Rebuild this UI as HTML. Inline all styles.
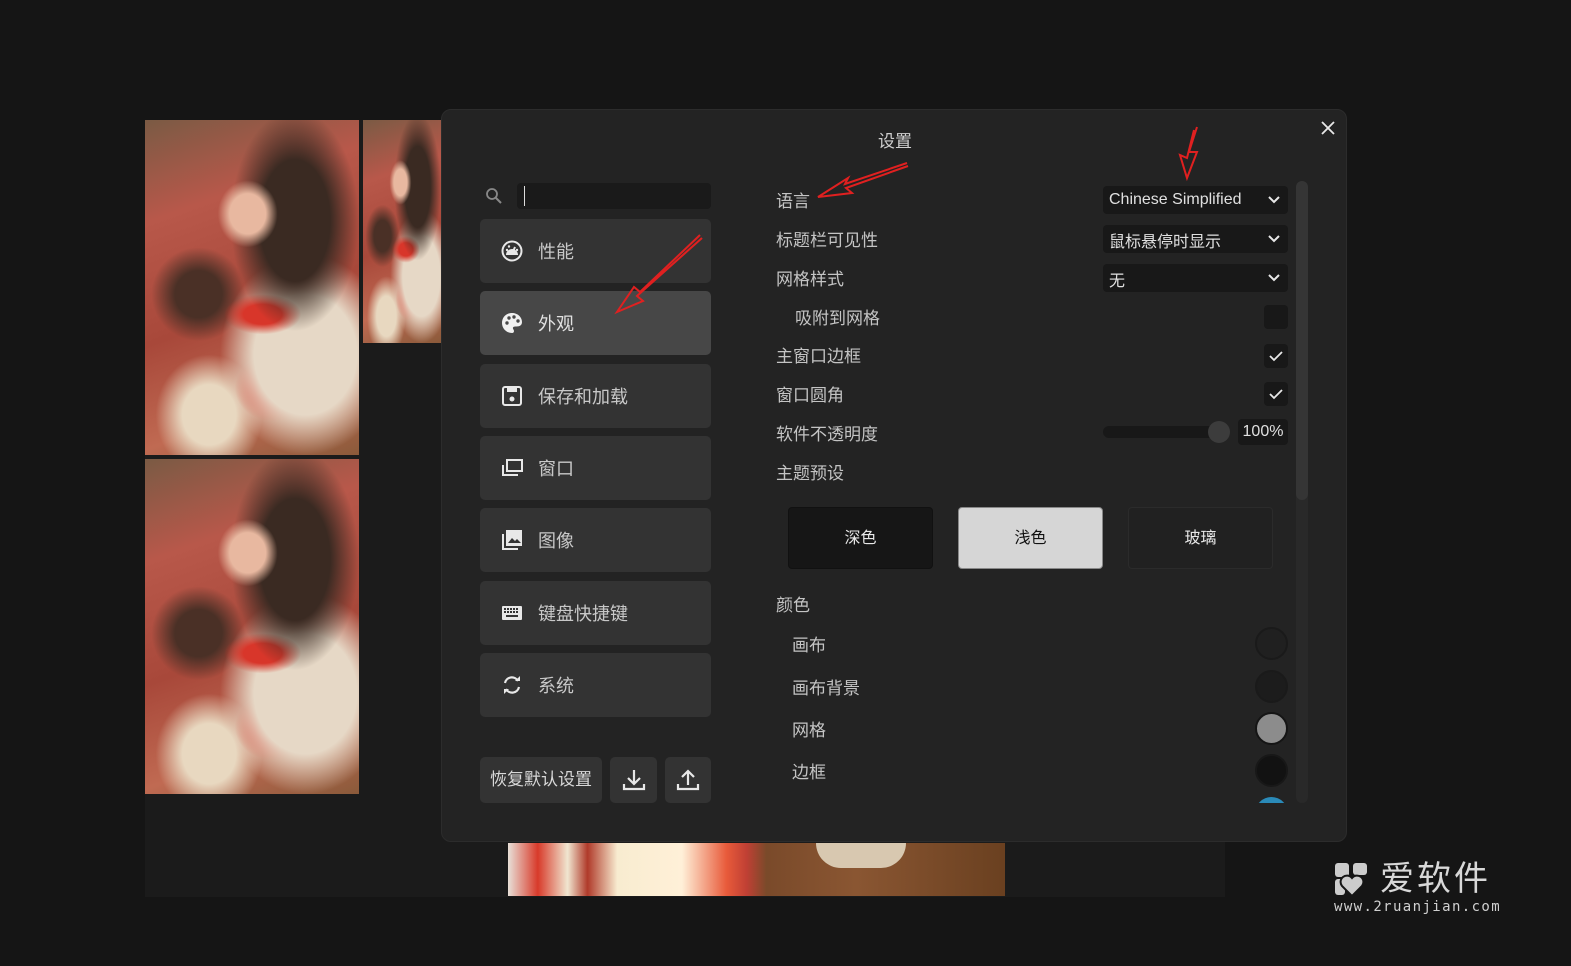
<!DOCTYPE html>
<html><head><meta charset="utf-8">
<style>
*{margin:0;padding:0;box-sizing:border-box}
body{width:1571px;height:966px;background:#151515;position:relative;overflow:hidden;font-family:"Liberation Sans","Noto Sans CJK SC",sans-serif;color:#d0d0d0}
.abs{position:absolute}
.photo{position:absolute;overflow:hidden;
background:
radial-gradient(ellipse 14% 10% at 48% 28%, #e8b8a0 0 60%, transparent 100%),
radial-gradient(ellipse 30% 33% at 70% 30%, #3a2a22 0 55%, transparent 100%),
radial-gradient(ellipse 18% 6% at 55% 58%, #d8362a 0 50%, transparent 100%),
radial-gradient(ellipse 40% 30% at 75% 70%, #e6d8c6 0 60%, transparent 100%),
radial-gradient(ellipse 18% 10% at 60% 80%, #d03a2a 0 50%, transparent 100%),
radial-gradient(ellipse 22% 14% at 25% 52%, #4a3026 0 50%, transparent 100%),
radial-gradient(ellipse 25% 18% at 30% 88%, #e8d8c0 0 50%, transparent 100%),
linear-gradient(160deg,#7a5a44 0%,#b8584a 25%,#a8483a 55%,#c06a52 80%,#8a5a3a 100%)}
.dlg{left:441px;top:109px;width:906px;height:733px;background:#232323;border-radius:10px;border:1px solid #2c2c2c}
.nav{position:absolute;left:480px;width:231px;height:64px;background:#333;border-radius:5px;font-size:18px;color:#c8c8c8}
.nav .t{position:absolute;left:58px;top:19px}
.nav svg{position:absolute;left:21px;top:21px}
.lbl{position:absolute;font-size:17px;color:#c4c4c4;left:776px}
.dd{position:absolute;left:1103px;width:185px;height:28px;background:#181818;border-radius:4px;font-size:16px;color:#e0e0e0;padding:5px 0 0 6px}
.dd svg{position:absolute;right:8px;top:9px}
.cb{position:absolute;left:1264px;width:24px;height:24px;background:#181818;border-radius:4px}
.cb svg{position:absolute;left:5px;top:6px}
.th{position:absolute;top:507px;width:145px;height:62px;border-radius:4px;font-size:16px;text-align:center;line-height:62px}
.ci{position:absolute;left:1255px;width:33px;height:33px;border-radius:50%}
.sub{position:absolute;left:792px;font-size:17px;color:#c4c4c4}
.bb{position:absolute;top:757px;height:46px;background:#333;border-radius:5px}
</style></head><body>
<div class="abs" style="left:145px;top:120px;width:1080px;height:777px;background:#1b1b1b"></div>
<div class="photo" style="left:145px;top:120px;width:214px;height:335px"></div>
<div class="photo" style="left:145px;top:459px;width:214px;height:335px"></div>
<div class="photo" style="left:363px;top:120px;width:78px;height:223px"></div>
<div class="abs" style="left:508px;top:843px;width:497px;height:53px;background:linear-gradient(90deg,#e8e0d8 0%,#d83a2a 6%,#f0e6d0 12%,#b03a2a 16%,#f8ecd0 22%,#fff0d8 35%,#e85a3a 44%,#c04034 48%,#7a4a2a 52%,#8a5632 70%,#6a4020 100%)"></div>
<div class="abs" style="left:816px;top:843px;width:90px;height:25px;background:#d8c8b0;border-radius:0 0 30px 30px"></div>

<div class="abs dlg"></div>
<div class="abs" style="left:878px;top:127px;font-size:17px;color:#d0d0d0">设置</div>
<svg class="abs" style="left:1321px;top:121px" width="14" height="14" viewBox="0 0 14 14"><path d="M1 1L13 13M13 1L1 13" stroke="#e8e8e8" stroke-width="1.8"/></svg>

<svg class="abs" style="left:485px;top:187px" width="18" height="18" viewBox="0 0 18 18"><circle cx="7" cy="7" r="5" stroke="#888" stroke-width="1.8" fill="none"/><path d="M11 11L16 16" stroke="#888" stroke-width="2"/></svg>
<div class="abs" style="left:517px;top:183px;width:194px;height:26px;background:#1a1a1a;border-radius:4px"></div>
<div class="abs" style="left:524px;top:186px;width:1px;height:20px;background:#ddd"></div>

<div class="nav" style="top:219px"><svg width="22" height="22" viewBox="0 0 22 22"><circle cx="11" cy="11" r="9.5" fill="none" stroke="#e8e8e8" stroke-width="2"/><path d="M5 15a6 6 0 0 1 12 0z" fill="#e8e8e8"/><path d="M11 14L14 7" stroke="#e8e8e8" stroke-width="2"/><circle cx="6" cy="10" r="1.2" fill="#e8e8e8"/><circle cx="8" cy="6.5" r="1.2" fill="#e8e8e8"/><circle cx="16" cy="10" r="1.2" fill="#e8e8e8"/></svg><span class="t">性能</span></div>
<div class="nav" style="top:291px;background:#474747"><svg width="22" height="22" viewBox="0 0 22 22"><path d="M11 1C5 1 1 5.5 1 11s4.5 10 10 10c1.5 0 2-1 2-2 0-1.5-1.5-2-1-3.5.5-1 2-1 3.5-1C19 14.5 21 13 21 10 21 5 16.5 1 11 1z" fill="#f0f0f0"/><circle cx="6" cy="11" r="1.7" fill="#474747"/><circle cx="8" cy="6" r="1.7" fill="#474747"/><circle cx="13" cy="5" r="1.7" fill="#474747"/><circle cx="17" cy="9" r="1.7" fill="#474747"/></svg><span class="t" style="color:#e0e0e0">外观</span></div>
<div class="nav" style="top:364px"><svg width="22" height="22" viewBox="0 0 22 22"><rect x="2" y="2" width="18" height="18" rx="2" fill="none" stroke="#e8e8e8" stroke-width="2"/><rect x="6" y="2" width="10" height="5" fill="#e8e8e8"/><circle cx="11" cy="14" r="2.5" fill="#e8e8e8"/></svg><span class="t">保存和加载</span></div>
<div class="nav" style="top:436px"><svg width="22" height="22" viewBox="0 0 22 22"><rect x="6" y="3" width="15" height="11" fill="none" stroke="#e8e8e8" stroke-width="2"/><path d="M2 8v10h15" fill="none" stroke="#e8e8e8" stroke-width="2"/></svg><span class="t">窗口</span></div>
<div class="nav" style="top:508px"><svg width="22" height="22" viewBox="0 0 22 22"><rect x="5" y="1" width="16" height="16" fill="#e8e8e8"/><path d="M7 14l4-5 3 3 2-2 4 4z" fill="#333"/><path d="M2 5v15h15" fill="none" stroke="#e8e8e8" stroke-width="2"/></svg><span class="t">图像</span></div>
<div class="nav" style="top:581px"><svg width="22" height="22" viewBox="0 0 22 22"><rect x="1" y="4" width="20" height="14" rx="1" fill="#e8e8e8"/><g fill="#333"><rect x="3" y="6" width="2" height="2"/><rect x="6" y="6" width="2" height="2"/><rect x="9" y="6" width="2" height="2"/><rect x="12" y="6" width="2" height="2"/><rect x="15" y="6" width="2" height="2"/><rect x="3" y="9" width="2" height="2"/><rect x="6" y="9" width="2" height="2"/><rect x="9" y="9" width="2" height="2"/><rect x="12" y="9" width="2" height="2"/><rect x="15" y="9" width="2" height="2"/><rect x="5" y="13" width="12" height="2"/></g></svg><span class="t">键盘快捷键</span></div>
<div class="nav" style="top:653px"><svg width="22" height="22" viewBox="0 0 22 22"><path d="M4 9a7 7 0 0 1 13-2" fill="none" stroke="#e8e8e8" stroke-width="2.2"/><path d="M18 13a7 7 0 0 1-13 2" fill="none" stroke="#e8e8e8" stroke-width="2.2"/><path d="M14 7h5V2z" fill="#e8e8e8"/><path d="M8 15H3v5z" fill="#e8e8e8"/></svg><span class="t">系统</span></div>

<div class="bb" style="left:480px;width:122px;font-size:17px;color:#d8d8d8;text-align:center;line-height:46px">恢复默认设置</div>
<div class="bb" style="left:610px;width:47px"><svg style="position:absolute;left:12px;top:11px" width="24" height="24" viewBox="0 0 24 24"><path d="M12 2v13M6 10l6 6 6-6M2 16v5h20v-5" fill="none" stroke="#e8e8e8" stroke-width="2.2"/></svg></div>
<div class="bb" style="left:665px;width:46px"><svg style="position:absolute;left:11px;top:11px" width="24" height="24" viewBox="0 0 24 24"><path d="M12 17V3M6 9l6-6 6 6M2 16v5h20v-5" fill="none" stroke="#e8e8e8" stroke-width="2.2"/></svg></div>

<div class="lbl" style="top:187px">语言</div>
<div class="lbl" style="top:226px">标题栏可见性</div>
<div class="lbl" style="top:265px">网格样式</div>
<div class="lbl" style="top:304px;left:795px">吸附到网格</div>
<div class="lbl" style="top:342px">主窗口边框</div>
<div class="lbl" style="top:381px">窗口圆角</div>
<div class="lbl" style="top:420px">软件不透明度</div>
<div class="lbl" style="top:459px">主题预设</div>

<div class="dd" style="top:186px">Chinese Simplified<svg width="12" height="9" viewBox="0 0 12 9"><path d="M1 2l5 5 5-5" fill="none" stroke="#e8e8e8" stroke-width="2"/></svg></div>
<div class="dd" style="top:225px;padding-top:3px">鼠标悬停时显示<svg width="12" height="9" viewBox="0 0 12 9"><path d="M1 2l5 5 5-5" fill="none" stroke="#e8e8e8" stroke-width="2"/></svg></div>
<div class="dd" style="top:264px;padding-top:3px">无<svg width="12" height="9" viewBox="0 0 12 9"><path d="M1 2l5 5 5-5" fill="none" stroke="#e8e8e8" stroke-width="2"/></svg></div>
<div class="cb" style="top:305px"></div>
<div class="cb" style="top:344px"><svg width="14" height="12" viewBox="0 0 14 12"><path d="M1 6l4 4 8-8" fill="none" stroke="#e8e8e8" stroke-width="1.8"/></svg></div>
<div class="cb" style="top:382px"><svg width="14" height="12" viewBox="0 0 14 12"><path d="M1 6l4 4 8-8" fill="none" stroke="#e8e8e8" stroke-width="1.8"/></svg></div>
<div class="abs" style="left:1103px;top:426px;width:125px;height:12px;background:#181818;border-radius:6px"></div>
<div class="abs" style="left:1208px;top:421px;width:22px;height:22px;background:#3c3c3c;border-radius:50%"></div>
<div class="abs" style="left:1238px;top:419px;width:50px;height:26px;background:#181818;border-radius:4px;font-size:16px;color:#e0e0e0;text-align:center;line-height:26px">100%</div>

<div class="abs" style="left:1296px;top:181px;width:12px;height:622px;background:#292929;border-radius:6px"></div>
<div class="abs" style="left:1296px;top:181px;width:12px;height:319px;background:#353535;border-radius:6px"></div>

<div class="th" style="left:788px;background:#161616;border:1px solid #111;color:#e8e8e8">深色</div>
<div class="th" style="left:958px;background:#d6d6d6;border:1px solid #888;color:#111">浅色</div>
<div class="th" style="left:1128px;background:#212121;border:1px solid #2b2b2b;color:#e8e8e8">玻璃</div>

<div class="lbl" style="top:591px">颜色</div>
<div class="sub" style="top:631px">画布</div>
<div class="sub" style="top:674px">画布背景</div>
<div class="sub" style="top:716px">网格</div>
<div class="sub" style="top:758px">边框</div>
<div class="ci" style="top:627px;background:#202020;border:2px solid #1a1a1a"></div>
<div class="ci" style="top:670px;background:#1c1c1c;border:2px solid #1a1a1a"></div>
<div class="ci" style="top:712px;background:#8c8c8c;border:2px solid #151515"></div>
<div class="ci" style="top:754px;background:#121212;border:2px solid #181818"></div>
<div class="abs" style="left:1255px;top:797px;width:33px;height:6px;overflow:hidden"><div style="width:33px;height:33px;border-radius:50%;background:#2a8ab8"></div></div>

<svg class="abs" style="left:0;top:0" width="1571" height="966" viewBox="0 0 1571 966">
<g fill="none" stroke="#e02020" stroke-width="2">
<path d="M907 163L845 184L848 178L818 197L852 193L846 188L908 166"/>
<path d="M700 235L640 292L634 287L617 312L643 301L637 296L702 238"/>
<path d="M1197 127L1189 152L1197 152L1187 178L1180 155L1187 158L1194 130"/>
</g></svg>

<svg class="abs" style="left:1334px;top:862px" width="40" height="36" viewBox="0 0 40 36"><rect x="1" y="1" width="14" height="14" rx="3" fill="#ccc"/><rect x="19" y="1" width="14" height="12" rx="3" fill="#ccc"/><rect x="1" y="17" width="10" height="16" rx="3" fill="#ccc"/><path d="M18 34L8 24a6 6 0 0 1 10-8 6 6 0 0 1 10 8z" fill="#ccc" stroke="#151515" stroke-width="2"/></svg>
<div class="abs" style="left:1380px;top:860px;font-size:34px;color:#d8d8d8;letter-spacing:3px;line-height:38px">爱软件</div>
<div class="abs" style="left:1334px;top:899px;font-size:14px;color:#d0d0d0;letter-spacing:1.4px;font-family:'DejaVu Sans Mono',monospace">www.2ruanjian.com</div>
</body></html>
